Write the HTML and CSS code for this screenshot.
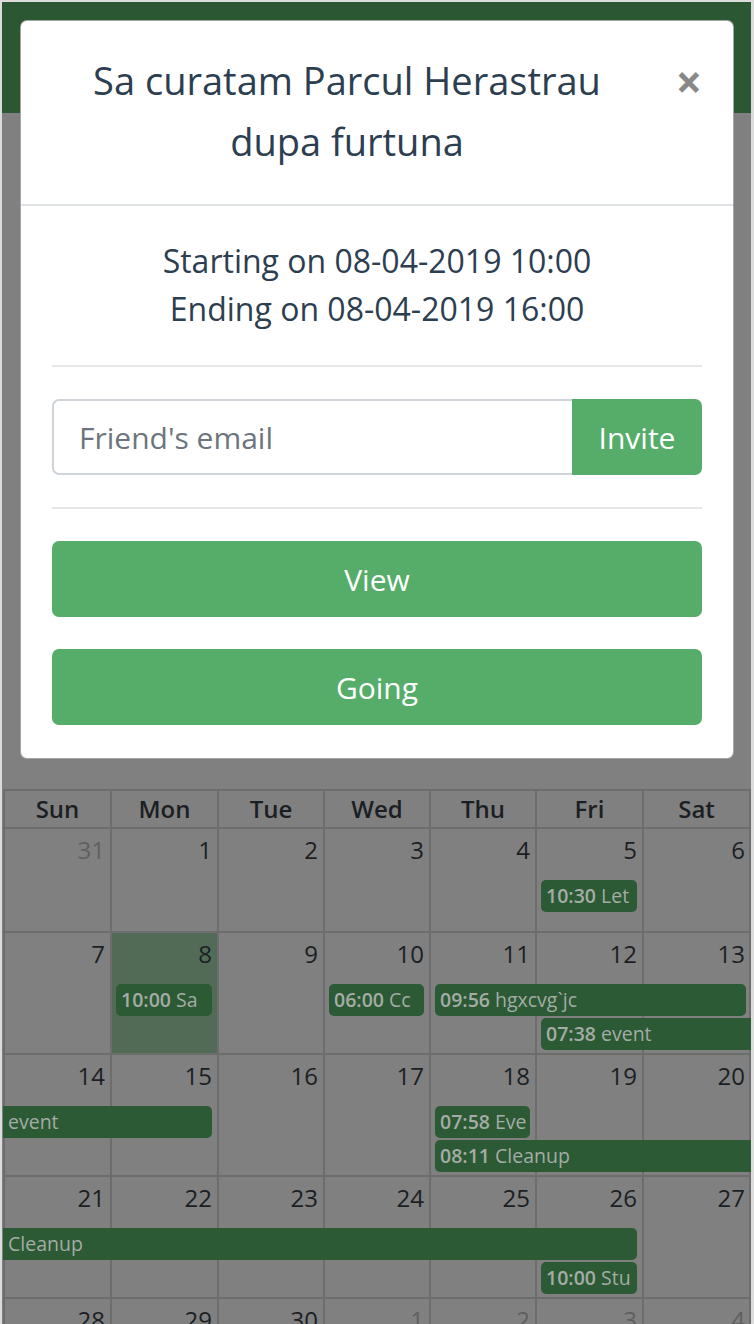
FILE: index.html
```html
<!DOCTYPE html>
<html lang="en">
<head>
<meta charset="utf-8">
<title>Event</title>
<link rel="stylesheet" href="styles.css">
</head>
<body>
<div class="screen">
  <header class="navbar"></header>
  <div class="toolbar"></div>
  <div class="calendar">
    <div class="cal-head">
      <div>Sun</div><div>Mon</div><div>Tue</div><div>Wed</div><div>Thu</div><div>Fri</div><div>Sat</div>
    </div>
    <div class="week">
      <div class="day other"><div class="num">31</div></div>
      <div class="day"><div class="num">1</div></div>
      <div class="day"><div class="num">2</div></div>
      <div class="day"><div class="num">3</div></div>
      <div class="day"><div class="num">4</div></div>
      <div class="day"><div class="num">5</div></div>
      <div class="day"><div class="num">6</div></div>
      <div class="ev c6"><b>10:30</b> Let</div>
    </div>
    <div class="week">
      <div class="day"><div class="num">7</div></div>
      <div class="day today"><div class="num">8</div></div>
      <div class="day"><div class="num">9</div></div>
      <div class="day"><div class="num">10</div></div>
      <div class="day"><div class="num">11</div></div>
      <div class="day"><div class="num">12</div></div>
      <div class="day"><div class="num">13</div></div>
      <div class="ev c2"><b>10:00</b> Sa</div>
      <div class="ev c4"><b>06:00</b> Cc</div>
      <div class="ev c5 s3"><b>09:56</b> hgxcvg`jc</div>
      <div class="ev c6 s2 r3 cont-r"><b>07:38</b> event</div>
    </div>
    <div class="week">
      <div class="day"><div class="num">14</div></div>
      <div class="day"><div class="num">15</div></div>
      <div class="day"><div class="num">16</div></div>
      <div class="day"><div class="num">17</div></div>
      <div class="day"><div class="num">18</div></div>
      <div class="day"><div class="num">19</div></div>
      <div class="day"><div class="num">20</div></div>
      <div class="ev c1 s2 cont-l">event</div>
      <div class="ev c5"><b>07:58</b> Eve</div>
      <div class="ev c5 s3 r3 cont-r"><b>08:11</b> Cleanup</div>
    </div>
    <div class="week">
      <div class="day"><div class="num">21</div></div>
      <div class="day"><div class="num">22</div></div>
      <div class="day"><div class="num">23</div></div>
      <div class="day"><div class="num">24</div></div>
      <div class="day"><div class="num">25</div></div>
      <div class="day"><div class="num">26</div></div>
      <div class="day"><div class="num">27</div></div>
      <div class="ev c1 s6 cont-l">Cleanup</div>
      <div class="ev c6 r3"><b>10:00</b> Stu</div>
    </div>
    <div class="week">
      <div class="day"><div class="num">28</div></div>
      <div class="day"><div class="num">29</div></div>
      <div class="day"><div class="num">30</div></div>
      <div class="day other"><div class="num">1</div></div>
      <div class="day other"><div class="num">2</div></div>
      <div class="day other"><div class="num">3</div></div>
      <div class="day other"><div class="num">4</div></div>
    </div>
  </div>

  <div class="modal">
    <div class="modal-header">
      <h5 class="modal-title">Sa curatam Parcul Herastrau dupa furtuna</h5>
      <button class="close" type="button">×</button>
    </div>
    <div class="modal-body">
      <div class="when">
        <div>Starting on 08-04-2019 10:00</div>
        <div>Ending on 08-04-2019 16:00</div>
      </div>
      <hr>
      <div class="invite">
        <input type="email" placeholder="Friend's email">
        <button type="button">Invite</button>
      </div>
      <hr>
      <button class="btn-block" type="button">View</button>
      <button class="btn-block" type="button">Going</button>
    </div>
  </div>
</div>
</body>
</html>
```

FILE: styles.css
```css
html, body {
  margin: 0;
  padding: 0;
  height: 1324px;
  overflow: hidden;
}

body {
  font-family: "Open Sans", "Liberation Sans", sans-serif;
  background: #dcdcdc;
}

.screen {
  position: relative;
  box-sizing: border-box;
  width: 754px;
  height: 1324px;
  border-style: solid;
  border-color: #dcdcdc;
  border-width: 2px 3px 0 2px;
  background: #808080;
  overflow: hidden;
}

.navbar {
  height: 111px;
  background: #2b5733;
}

.toolbar {
  height: 676px;
}

/* calendar */
.calendar {
  --cols: 107px 107px 106px 106px 106px 107px 109px;
  margin-left: 1px;
}

.cal-head {
  display: grid;
  grid-template-columns: var(--cols);
  border-top: 2px solid #6d6d6d;
  border-bottom: 2px solid #6d6d6d;
}

.cal-head div {
  border-left: 2px solid #6d6d6d;
  text-align: center;
  font-weight: 600;
  font-size: 24px;
  line-height: 36px;
  color: #1b1f24;
}

.cal-head div:last-child {
  border-right: 2px solid #6d6d6d;
}

.week {
  display: grid;
  grid-template-columns: var(--cols);
  grid-template-rows: 49px auto auto minmax(3px, 1fr);
  min-height: 102px;
  border-bottom: 2px solid #6d6d6d;
}

.day {
  grid-row: 1 / -1;
  border-left: 2px solid #6d6d6d;
}

.day:nth-child(1) { grid-column: 1; }
.day:nth-child(2) { grid-column: 2; }
.day:nth-child(3) { grid-column: 3; }
.day:nth-child(4) { grid-column: 4; }
.day:nth-child(5) { grid-column: 5; }
.day:nth-child(6) { grid-column: 6; }
.day:nth-child(7) { grid-column: 7; border-right: 2px solid #6d6d6d; }

.today {
  background: #526b56;
}

.num {
  font-size: 24px;
  line-height: 29px;
  padding: 6px 5px 0 0;
  text-align: right;
  color: #1b1f24;
}

.day:nth-child(7) .num {
  padding-right: 4px;
}

.other .num {
  color: #5f5f5f;
}

.ev {
  grid-row: 2;
  height: 32px;
  margin: 2px 5px 0 6px;
  padding-left: 5px;
  border-radius: 5px;
  background: #2b5a35;
  color: #a5aca5;
  font-size: 19.5px;
  line-height: 32px;
  white-space: nowrap;
  overflow: hidden;
  text-overflow: clip;
}

.ev b {
  font-weight: 600;
}

.r3 { grid-row: 3; }

.c1 { grid-column-start: 1; }
.c2 { grid-column-start: 2; }
.c4 { grid-column-start: 4; }
.c5 { grid-column-start: 5; }
.c6 { grid-column-start: 6; }
.s2 { grid-column-end: span 2; }
.s3 { grid-column-end: span 3; }
.s6 { grid-column-end: span 6; }

.cont-l {
  margin-left: 0;
  border-top-left-radius: 0;
  border-bottom-left-radius: 0;
}

.cont-r {
  margin-right: 0;
  border-top-right-radius: 0;
  border-bottom-right-radius: 0;
}

/* modal */
.modal {
  position: absolute;
  top: 18px;
  left: 18px;
  box-sizing: border-box;
  width: 714px;
  background: #fff;
  border: 1px solid rgba(0, 0, 0, 0.35);
  border-radius: 7px;
  color: #2c3e50;
}

.modal-header {
  display: flex;
  align-items: flex-start;
  padding: 29px 28px 32px;
  border-bottom: 2px solid #dee2e6;
}

.modal-title {
  flex: 1;
  margin: 0 10px;
  text-align: center;
  font-size: 38px;
  line-height: 61px;
  font-weight: 400;
}

.close {
  width: 60px;
  height: 61px;
  padding: 0 3px 0 0;
  border: 0;
  background: none;
  text-align: right;
  font-family: inherit;
  font-size: 46px;
  font-weight: 700;
  line-height: 46px;
  color: #888;
}

.modal-body {
  display: flex;
  flex-direction: column;
  gap: 32px;
  padding: 31px 31px 33px;
}

.when {
  text-align: center;
  font-size: 32px;
  line-height: 48px;
}

.modal-body hr {
  margin: 0;
  border: 0;
  border-top: 2px solid #e6e6e6;
}

.invite {
  display: flex;
  height: 76px;
}

.invite input {
  flex: 1;
  min-width: 0;
  box-sizing: border-box;
  height: 76px;
  padding: 0 25px;
  border: 2px solid #ced4da;
  border-right: 0;
  border-radius: 7px 0 0 7px;
  font-family: inherit;
  font-size: 30px;
  color: #495057;
  outline: none;
}

.invite input::placeholder {
  color: #6c757d;
}

.invite button {
  width: 130px;
  border: 0;
  border-radius: 0 7px 7px 0;
  background: #55ad69;
  color: #fff;
  font-family: inherit;
  font-size: 30px;
}

.btn-block {
  height: 76px;
  border: 0;
  border-radius: 7px;
  background: #55ad69;
  color: #fff;
  font-family: inherit;
  font-size: 30px;
}
```
